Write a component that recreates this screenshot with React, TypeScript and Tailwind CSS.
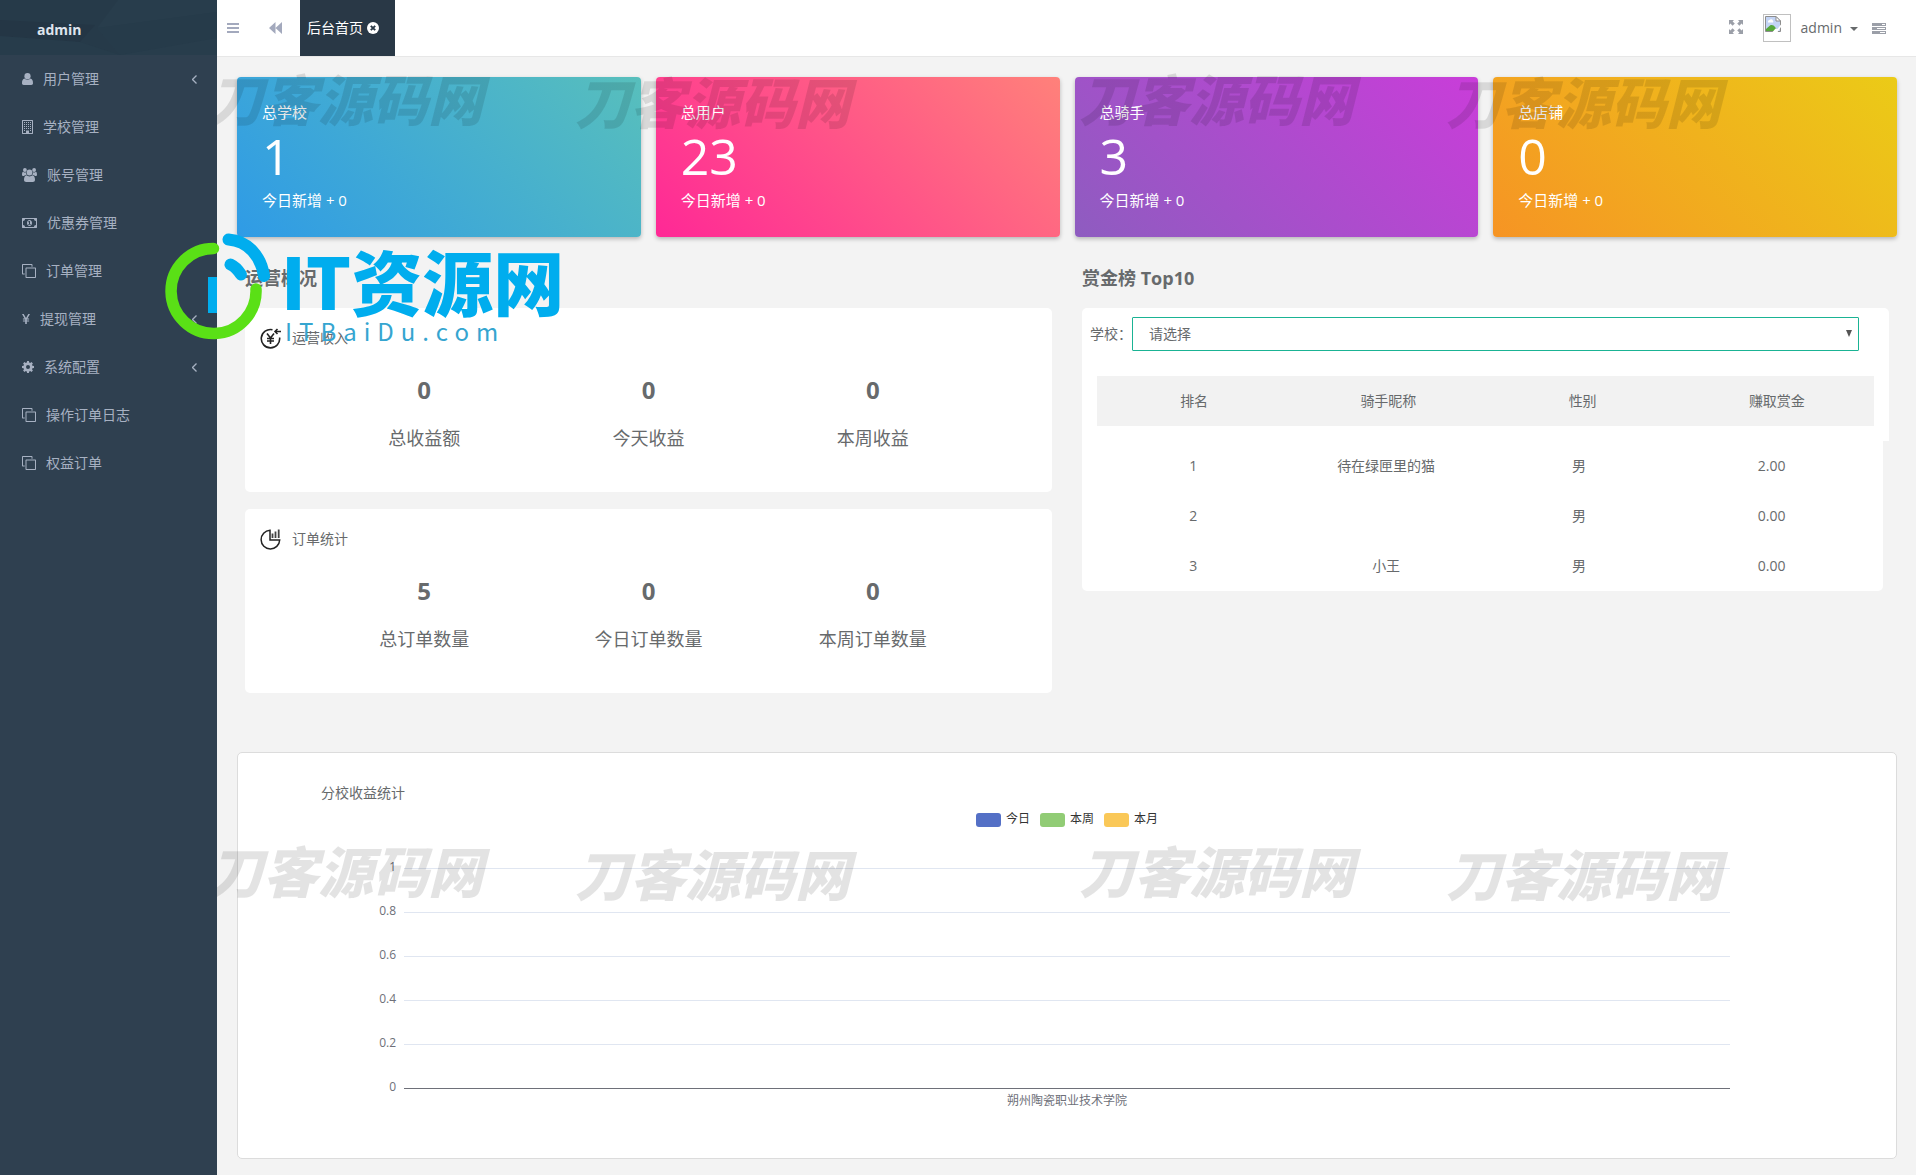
import React from "react";

type IconName = "user" | "building" | "users" | "money" | "clone" | "yen" | "cog";

const ICONS: Record<IconName, { w: number; h: number; body: React.ReactNode }> = {
  user: {
    w: 11,
    h: 12,
    body: (
      <>
        <circle cx="5.5" cy="3.2" r="3.1" />
        <path d="M2.6 5.6C.8 5.8 0 7.600 0 10.300 0 11.300.7 12 1.700 12h7.600c1 0 1.700-.7 1.700-1.700 0-2.700-.8-4.500-2.600-4.700-.8.800-1.800 1.200-2.900 1.200s-2.100-.4-2.900-1.200z" />
      </>
    ),
  },
  building: {
    w: 11,
    h: 14,
    body: (
      <>
        <path fillRule="evenodd" d="M0 .5C0 .2.2 0 .5 0h10c.3 0 .5.2.5.5v13c0 .3-.2.5-.5.5H.5c-.3 0-.5-.2-.5-.5zM1 1v12h3v-2.500h3V13h3V1z" />
        <path d="M2 2h1v1H2zM4 2h1v1H4zM6 2h1v1H6zM8 2h1v1H8zM2 4h1v1H2zM4 4h1v1H4zM6 4h1v1H6zM8 4h1v1H8zM2 6h1v1H2zM4 6h1v1H4zM6 6h1v1H6zM8 6h1v1H8zM2 8h1v1H2zM4 8h1v1H4zM6 8h1v1H6zM8 8h1v1H8zM2 10h1v1H2zM8 10h1v1H8z" />
      </>
    ),
  },
  users: {
    w: 15,
    h: 14,
    body: (
      <>
        <circle cx="2.900" cy="2" r="1.900" />
        <circle cx="12.100" cy="2" r="1.900" />
        <circle cx="7.500" cy="4.500" r="2.900" />
        <path d="M4.200 7C3.200 7 2.500 7.300 2 8H1.400C.6 8 0 7.600 0 6.800 0 5.400.3 3.700 1.200 3.700c.4 0 .8.800 1.700.8.400 0 .8-.1 1.100-.2 0 1 .1 1.900.7 2.700zM10.800 7c1 0 1.700.3 2.200 1h.6c.8 0 1.400-.4 1.400-1.200 0-1.400-.3-3.100-1.200-3.100-.4 0-.8.800-1.700.8-.4 0-.8-.1-1.100-.2 0 1-.1 1.900-.7 2.700z" />
        <path d="M4.700 7.200C2.700 7.400 2 9.400 2 11.800 2 13.200 2.900 14 4.200 14h6.600c1.300 0 2.200-.8 2.200-2.200 0-2.400-.7-4.400-2.700-4.600-.7.700-1.700 1.200-2.800 1.200s-2.100-.5-2.800-1.200z" />
      </>
    ),
  },
  money: {
    w: 15,
    h: 10,
    body: (
      <>
        <path fillRule="evenodd" d="M.5 0h14c.3 0 .5.2.5.5v9c0 .3-.2.500-.5.500H.5C.2 10 0 9.800 0 9.500v-9C0 .2.2 0 .5 0zM3 1c0 1.200-.8 2-2 2v4c1.200 0 2 .8 2 2h9c0-1.200.8-2 2-2V3c-1.200 0-2-.8-2-2z" />
        <path fillRule="evenodd" d="M7.500 2c1.500 0 2.500 1.400 2.500 3S9 8 7.500 8 5 6.600 5 5s1-3 2.500-3zM7.100 3l-1.100.8.4.6.6-.4v2H6.200v.8h2.600V6H8V3z" />
      </>
    ),
  },
  clone: {
    w: 14,
    h: 14,
    body: (
      <path fillRule="evenodd" d="M4.500 3.500h8.500c.6 0 1 .4 1 1V13c0 .6-.4 1-1 1H4.500c-.6 0-1-.4-1-1V4.500c0-.6.400-1 1-1zm0 1V13H13V4.500zM1 0h8.500c.6 0 1 .4 1 1v1.700h-1V1H1v8.500h1.700v1H1c-.6 0-1-.4-1-1V1c0-.6.4-1 1-1z" />
    ),
  },
  yen: {
    w: 8,
    h: 10,
    body: (
      <path d="M3.200 10V7.400H.9v-1h2.300v-.8H.9v-1h1.700L0 0h1.700l2.300 4 2.300-4H8L5.400 4.600h1.700v1H4.800v.8h2.300v1H4.800V10z" />
    ),
  },
  cog: {
    w: 12,
    h: 12,
    body: (
      <path fillRule="evenodd" d="M5.100 0h1.800l.3 1.600 1 .4L9.500 1.100l1.400 1.400L10 3.800l.4 1 1.600.3v1.800l-1.600.3-.4 1 .9 1.300-1.400 1.400L8.200 10l-1 .4L6.900 12H5.100l-.3-1.600-1-.4-1.300.9-1.400-1.400.9-1.300-.4-1L0 6.900V5.100l1.600-.3.4-1-.9-1.300 1.400-1.400L3.800 2l1-.4zM6 4a2 2 0 100 4 2 2 0 000-4z" />
    ),
  },
};

function Icon({ name }: { name: IconName }) {
  const { w, h, body } = ICONS[name];
  return (
    <svg width={w} height={h} viewBox={`0 0 ${w} ${h}`} fill="currentColor" className="shrink-0" aria-hidden="true">
      {body}
    </svg>
  );
}

const MENU: { icon: IconName; label: string; sub?: boolean }[] = [
  { icon: "user", label: "用户管理", sub: true },
  { icon: "building", label: "学校管理" },
  { icon: "users", label: "账号管理" },
  { icon: "money", label: "优惠券管理" },
  { icon: "clone", label: "订单管理" },
  { icon: "yen", label: "提现管理", sub: true },
  { icon: "cog", label: "系统配置", sub: true },
  { icon: "clone", label: "操作订单日志" },
  { icon: "clone", label: "权益订单" },
];

function Sidebar() {
  return (
    <aside className="w-[217px] shrink-0 bg-[#2f4050] text-[#a7b1c2]">
      <div className="relative h-[55px] overflow-hidden bg-[#263a49]">
        <svg className="absolute inset-0 h-full w-full" viewBox="0 0 217 55" preserveAspectRatio="none" aria-hidden="true">
          <path d="M0 20L95 25 80 42 0 36z" fill="#243645" />
          <path d="M0 36L80 42 120 55H0z" fill="#273c4b" />
          <path d="M118 0L97 28 120 55H217V0z" fill="#283d4c" />
          <path d="M97 28L217 12V38L120 55z" fill="#263b4a" />
        </svg>
        <p className="relative pl-[37px] pt-5 text-sm font-bold leading-5 text-[#dfe4ed]">admin</p>
      </div>
      <nav>
        <ul>
          {MENU.map((m) => (
            <li key={m.label}>
              <a href="#" className="flex h-12 items-center gap-2.5 pl-[22px] pr-5 text-sm">
                <Icon name={m.icon} />
                <span className="flex-1">{m.label}</span>
                {m.sub && (
                  <svg width="5" height="9" viewBox="0 0 5 9" fill="none" stroke="currentColor" strokeWidth="1.3" aria-hidden="true">
                    <path d="M4.500.5l-4 4 4 4" />
                  </svg>
                )}
              </a>
            </li>
          ))}
        </ul>
      </nav>
    </aside>
  );
}

function TopBar() {
  return (
    <header className="flex h-[57px] items-stretch border-b border-[#e7e7e7] bg-white text-[#9b9fa8]">
      <button type="button" aria-label="菜单" className="flex w-8 items-center pl-2.5 text-[#a3a9bd]">
        <svg width="12" height="10" viewBox="0 0 12 10" fill="currentColor">
          <path d="M0 0h12v2H0zM0 4h12v2H0zM0 8h12v2H0z" />
        </svg>
      </button>
      <button type="button" aria-label="向左" className="flex w-[51px] items-center justify-end pr-[18px] text-[#a3a9bd]">
        <svg width="13" height="12" viewBox="0 0 13 12" fill="currentColor">
          <path d="M6.500 0v12L0 6zM13 0v12L6.500 6z" />
        </svg>
      </button>
      <a href="#" className="flex w-[95px] items-center gap-1 bg-[#293846] pl-[7px] text-sm text-white">
        后台首页
        <svg width="12" height="12" viewBox="0 0 12 12" aria-hidden="true">
          <circle cx="6" cy="6" r="6" fill="white" />
          <path d="M3.800 3.800l4.400 4.400M8.200 3.800L3.800 8.200" stroke="#293846" strokeWidth="1.900" />
        </svg>
      </a>
      <div className="ml-auto flex items-center pr-[30px]">
        <button type="button" aria-label="全屏" className="mb-0.5">
          <svg width="14" height="14" viewBox="0 0 14 14" fill="currentColor">
            <path d="M0 0h5L3.600 1.400 5.800 3.600 3.600 5.800 1.400 3.600 0 5zM14 0H9l1.400 1.400-2.200 2.200 2.200 2.200 2.200-2.200L14 5zM0 14h5l-1.400-1.400 2.200-2.200-2.200-2.200-2.200 2.200L0 9zM14 14H9l1.400-1.400-2.200-2.200 2.200-2.200 2.200 2.200L14 9z" />
          </svg>
        </button>
        <button type="button" className="ml-5 flex items-center text-sm text-[#676a6c]">
          <span className="flex h-7 w-7 items-start border border-[#c0c0c0] p-px">
            <svg width="16" height="16" viewBox="0 0 16 16" role="img" aria-label="头像">
              <path d="M.5.5h10.500l4.500 4.500v10.500H.5z" fill="#c3d4f5" stroke="#8d8d8d" />
              <path d="M11 .5V5h4.500z" fill="#fff" stroke="#8d8d8d" />
              <path d="M3 5.500a1.500 1.500 0 011.500-1.500 2 2 0 013.500 1 1 1 0 010 1.500H3z" fill="#fff" />
              <path d="M1 15v-2l4-3.500c2-1 4 0 5 1.500l3 4z" fill="#55a83c" />
              <path d="M7.500 16l3-3.500 2 .5L16 8.500V11l-3.500 5z" fill="#fff" />
            </svg>
          </span>
          <span className="ml-2.5">admin</span>
          <svg className="ml-2 mt-0.5" width="8" height="4" viewBox="0 0 8 4" fill="currentColor" aria-hidden="true">
            <path d="M0 0h8L4 4z" />
          </svg>
        </button>
        <button type="button" aria-label="任务" className="ml-3.5">
          <svg width="14" height="11" viewBox="0 0 14 11" fill="currentColor">
            <path fillRule="evenodd" d="M0 0h14v3H0zM10 1h3v1h-3zM0 4h14v3H0zM5 5h8v1H5zM0 8h14v3H0zM8 9h5v1H8z" />
          </svg>
        </button>
      </div>
    </header>
  );
}

const CARDS = [
  { label: "总学校", value: "1", bg: "bg-[linear-gradient(45deg,#2f9be6,#58bfbc)]" },
  { label: "总用户", value: "23", bg: "bg-[linear-gradient(45deg,#ff2896,#ff817a)]" },
  { label: "总骑手", value: "3", bg: "bg-[linear-gradient(45deg,#8e5cc0,#c93dd9)]" },
  { label: "总店铺", value: "0", bg: "bg-[linear-gradient(45deg,#f69424,#ebcb17)]" },
];

function StatCards() {
  return (
    <div className="grid grid-cols-4 gap-[15px]">
      {CARDS.map((c) => (
        <div key={c.label} className={`h-40 rounded px-[25px] pt-[19px] text-[15px] text-white shadow-[0_2px_4px_rgba(0,0,0,0.25)] ${c.bg}`}>
          <p className="leading-8">{c.label}</p>
          <p className="text-[50px] leading-[56px]">{c.value}</p>
          <p className="leading-8">今日新增 + 0</p>
        </div>
      ))}
    </div>
  );
}

const INCOME = [
  { label: "总收益额", value: 0 },
  { label: "今天收益", value: 0 },
  { label: "本周收益", value: 0 },
];
const ORDERS = [
  { label: "总订单数量", value: 5 },
  { label: "今日订单数量", value: 0 },
  { label: "本周订单数量", value: 0 },
];

function Panel({ icon, title, items }: { icon: React.ReactNode; title: string; items: { label: string; value: number }[] }) {
  return (
    <section className="h-[184px] rounded-[5px] bg-white pt-5">
      <h3 className="flex h-5 items-center gap-[11px] pl-[15px] text-sm">
        {icon}
        {title}
      </h3>
      <dl className="grid grid-cols-3 px-[67px] pt-[22px] text-center">
        {items.map((i) => (
          <div key={i.label} className="flex flex-col-reverse">
            <dt className="text-lg leading-[56px]">{i.label}</dt>
            <dd className="text-2xl font-bold leading-10">{i.value}</dd>
          </div>
        ))}
      </dl>
    </section>
  );
}

const yenIcon = (
  <svg width="21" height="21" viewBox="0 0 21 21" fill="none" stroke="#222" strokeWidth="1.600" aria-hidden="true">
    <path d="M12.500 1.700A9.200 9.200 0 1019.600 9.500" />
    <path d="M15 3.500h6M17.500 1l-2.500 2.500L17.500 6" />
    <path d="M7 5.500l3.500 4.500L14 5.500M7 10.500h7M7 13h7M10.500 10v6" />
  </svg>
);

const pieIcon = (
  <svg width="21" height="21" viewBox="0 0 21 21" fill="none" aria-hidden="true">
    <path d="M10 1.300A9.300 9.300 0 1019.700 11H10z" stroke="#222" strokeWidth="1.500" />
    <path d="M12.500 9V4.500M15.500 9V2.500M18.700 9V.5" stroke="#444" strokeWidth="1.800" />
  </svg>
);

const ROWS = [
  ["1", "待在绿匣里的猫", "男", "2.00"],
  ["2", "", "男", "0.00"],
  ["3", "小王", "男", "0.00"],
];

function Ranking() {
  return (
    <div>
      <div className="flex h-[68px] rounded-t-[5px] bg-white pl-2 pt-[9px] text-sm">
        <label htmlFor="school" className="w-[42px] leading-[34px]">
          学校：
        </label>
        <div className="relative mr-[30px] h-[34px] flex-1">
          <select id="school" className="h-full w-full appearance-none rounded-[1px] border border-[#1ab394] bg-white pl-4 outline-none">
            <option>请选择</option>
          </select>
          <svg className="pointer-events-none absolute right-[7px] top-[13px]" width="6" height="7" viewBox="0 0 6 7" fill="#555" aria-hidden="true">
            <path d="M0 0h6L3 7z" />
          </svg>
        </div>
      </div>
      <table className="block text-center text-sm">
        <thead className="block bg-white px-[15px] pb-[15px]">
          <tr className="grid h-[50px] grid-cols-4 items-center bg-[#f2f2f2]">
            {["排名", "骑手昵称", "性别", "赚取赏金"].map((h) => (
              <th key={h} scope="col" className="font-normal">
                {h}
              </th>
            ))}
          </tr>
        </thead>
        <tbody className="mr-1.5 block rounded-b-[5px] bg-white px-[15px]">
          {ROWS.map((r) => (
            <tr key={r[0]} className="grid h-[50px] grid-cols-4 items-center">
              {r.map((c, i) => (
                <td key={i}>{c}</td>
              ))}
            </tr>
          ))}
        </tbody>
      </table>
    </div>
  );
}

const LEGEND = [
  { label: "今日", bg: "bg-[#5470c6]" },
  { label: "本周", bg: "bg-[#91cc75]" },
  { label: "本月", bg: "bg-[#fac858]" },
];
const TICKS = ["1", "0.8", "0.6", "0.4", "0.2"];

function Chart() {
  return (
    <section className="mt-[59px] h-[407px] rounded-[5px] border border-[#dcdcdc] bg-white px-[83px] pt-[30px]">
      <h3 className="text-sm leading-5">分校收益统计</h3>
      <ul className="mt-1.5 flex h-5 items-center justify-center gap-2.5 text-xs text-[#333]">
        {LEGEND.map((l) => (
          <li key={l.label} className="flex items-center gap-[5px]">
            <span className={`mt-0.5 h-3.5 w-[25px] rounded-[3px] ${l.bg}`} />
            {l.label}
          </li>
        ))}
      </ul>
      <div className="mr-[83px] mt-[27px] text-xs text-[#6e7079]">
        {TICKS.map((t) => (
          <div key={t} className="flex h-11 items-start">
            <span className="w-[75px] text-right leading-[22px]">{t}</span>
            <span className="ml-2 mt-3 h-px flex-1 bg-[#e0e6f1]" />
          </div>
        ))}
        <div className="flex h-[15px] items-start">
          <span className="w-[75px] text-right leading-[22px]">0</span>
          <span className="ml-2 mt-3 h-px flex-1 bg-[#6e7079]" />
        </div>
        <p className="pl-[83px] text-center leading-5">朔州陶瓷职业技术学院</p>
      </div>
    </section>
  );
}

const MARKS = [
  "left-[-9px] top-[60px]",
  "left-[358px] top-[63px]",
  "left-[862px] top-[60px]",
  "left-[1229px] top-[63px]",
  "left-[-9px] top-[832px]",
  "left-[358px] top-[835px]",
  "left-[862px] top-[832px]",
  "left-[1229px] top-[835px]",
];

function Watermarks() {
  return (
    <div className="pointer-events-none absolute inset-0 overflow-hidden" aria-hidden="true">
      {MARKS.map((m) => (
        <span key={m} className={`absolute whitespace-nowrap text-[55px] font-black italic leading-[80px] text-black/11 ${m}`}>
          刀客源码网
        </span>
      ))}
    </div>
  );
}

function SiteLogo() {
  return (
    <div className="pointer-events-none absolute left-[165px] top-[231px] flex" aria-hidden="true">
      <svg width="108" height="110" viewBox="0 0 108 110" fill="none" strokeLinecap="round">
        <path d="M48.500 17.500A42.500 42.500 0 1091 58" stroke="#5ae016" strokeWidth="11.500" />
        <path d="M63.500 8.500C83 10 96 25 99 45" stroke="#00adee" strokeWidth="12" />
        <path d="M65.500 33.500C69 35 73 39 76 43.500" stroke="#00adee" strokeWidth="12" />
        <path d="M43 46h9v36h-9z" fill="#00adee" />
      </svg>
      <div className="ml-2 whitespace-nowrap text-[#00adee]">
        <p className="mt-2 text-[71px] font-black leading-[80px] font-['Noto_Sans_CJK_SC',sans-serif]">IT资源网</p>
        <p className="pl-1 text-2xl leading-6 tracking-[7px] text-[#35a5d0] font-['Noto_Sans_CJK_SC',sans-serif]">ITBaiDu.com</p>
      </div>
    </div>
  );
}

export default function App() {
  return (
    <div className="relative flex min-h-screen bg-[#f3f3f3] text-[#676a6c] font-['Open_Sans','Noto_Sans_CJK_SC',sans-serif]">
      <Sidebar />
      <div className="relative min-w-0 flex-1">
        <TopBar />
        <main className="pb-4 pl-5 pr-[19px] pt-5">
          <StatCards />
          <div className="mt-7 grid grid-cols-2 gap-[30px] px-2">
            <div>
              <h2 className="mb-[17px] text-lg font-bold leading-[26px]">运营概况</h2>
              <div className="flex flex-col gap-[17px]">
                <Panel icon={yenIcon} title="运营收入" items={INCOME} />
                <Panel icon={pieIcon} title="订单统计" items={ORDERS} />
              </div>
            </div>
            <div>
              <h2 className="mb-[17px] text-lg font-bold leading-[26px]">赏金榜 Top10</h2>
              <Ranking />
            </div>
          </div>
          <Chart />
        </main>
        <Watermarks />
      </div>
      <SiteLogo />
    </div>
  );
}
